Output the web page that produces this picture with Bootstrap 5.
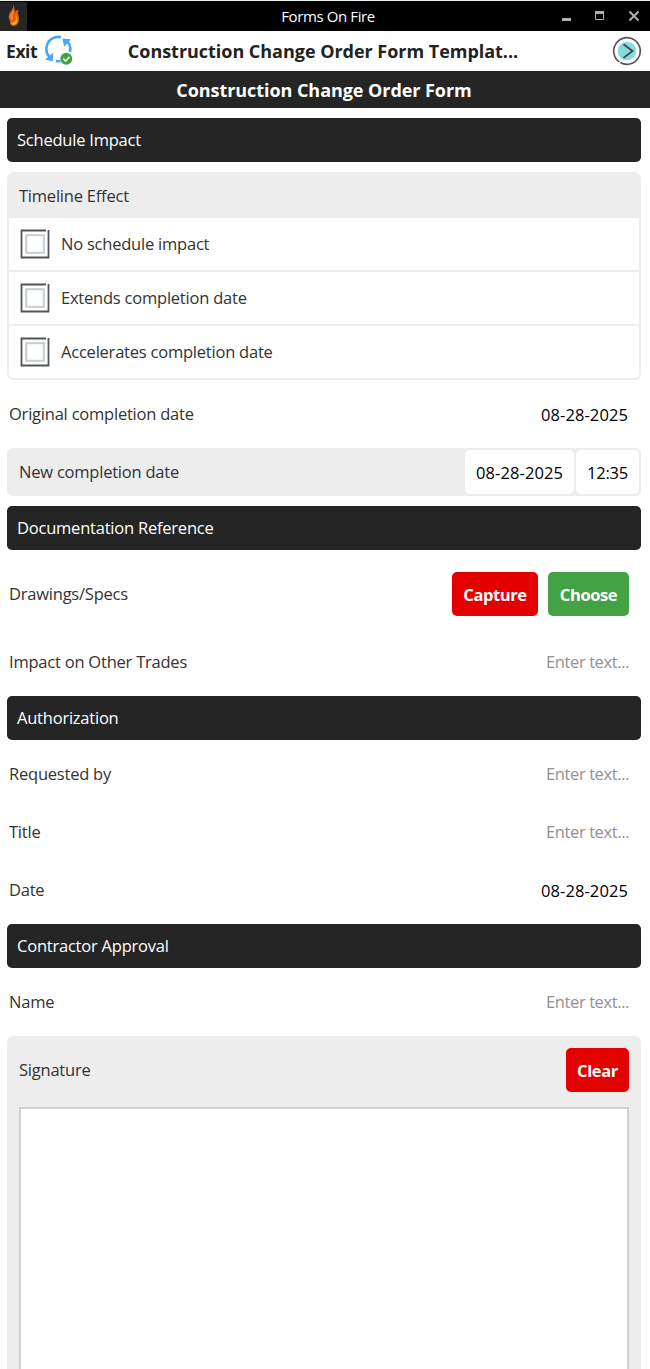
<!DOCTYPE html>
<html lang="en">
<head>
<meta charset="utf-8">
<meta name="viewport" content="width=device-width, initial-scale=1">
<title>Forms On Fire</title>
<link rel="stylesheet" href="https://cdn.jsdelivr.net/npm/bootstrap@5.3.0/dist/css/bootstrap.min.css">
<style>
  :root { --ink: #252525; --panel: #ededed; }
  body { font-family: "Open Sans", "Noto Sans", sans-serif; font-size: 16.5px; line-height: 24px; letter-spacing: -.22px; color: #333; height: 1369px; overflow: hidden; }
  .titlebar { height: 31px; border-top: 1px solid #e9efec; background: #000; font-size: 15px; letter-spacing: -.38px; }
  .titlebar-text { padding-left: 6px; }
  .app-icon { width: 27px; height: 29px; background: var(--ink); }
  .titlebar-side { width: 108px; }
  .appbar { height: 40px; font-size: 18px; font-weight: 700; letter-spacing: -.03px; color: #222; padding: 0 8px 0 6px; }
  .exit-link { width: 30px; font-size: 17.5px; letter-spacing: -.4px; }
  .appbar-title { padding-right: 40px; }
  .form-title { height: 37px; background: var(--ink); font-size: 18px; font-weight: 700; letter-spacing: -.06px; padding-right: 2px; }
  .form-body { padding: 10px 9px 0 7px; gap: 10px; }
  .section-bar { height: 44px; border-radius: 5px; padding: 0 10px; background: var(--ink); }
  .choices { border: 2px solid var(--panel); border-top: 0; border-radius: 6px; overflow: hidden; }
  .choices-head { height: 46px; padding: 2px 10px 0; background: var(--panel); }
  .choice { height: 52px; padding: 0 11px; gap: 11px; }
  .choice + .choice { height: 54px; border-top: 2px solid var(--panel); }
  .field { height: 48px; padding: 0 12px 0 2px; }
  .field-tall { height: 68px; }
  .field-value { color: #000; padding: 2px 1px 0 0; letter-spacing: .1px; }
  .hint { color: #919191; letter-spacing: -.4px; }
  .panel-row { height: 48px; padding: 2px 2px 2px 12px; background: var(--panel); border-radius: 6px; gap: 2px; }
  .stamp { height: 44px; border-radius: 5px; color: #000; padding-top: 2px; letter-spacing: .1px; }
  .stamp-date { width: 109px; }
  .stamp-time { width: 63px; letter-spacing: -.2px; }
  .action { height: 44px; border: 0; border-radius: 5px; padding: 2px 0 0; font-size: 16.5px; font-weight: 700; letter-spacing: -.4px; color: #fff; }
  .action-red { background: #e50000; }
  .action-green { background: #43a243; }
  .sign-panel { height: 400px; padding: 12px; background: var(--panel); border-radius: 6px; }
  .sign-area { height: 330px; margin-top: 15px; border: 2px solid #d0d0d0; background: #fff; }
</style>
</head>
<body class="bg-white">
<svg class="d-none" xmlns="http://www.w3.org/2000/svg">
  <symbol id="checkbox" viewBox="0 0 30 30">
    <path d="M26 1.500H1.500v27h27V1" fill="none" stroke="#555" stroke-width="1.800"/>
    <rect x="6.200" y="6.200" width="17.600" height="17.600" fill="#fff" stroke="#c5ced2" stroke-width="2"/>
  </symbol>
</svg>

<header>
  <div class="titlebar d-flex align-items-center justify-content-between text-white">
    <div class="titlebar-side">
      <div class="app-icon d-flex align-items-center justify-content-center">
        <svg width="12" height="22" viewBox="0 0 12 22">
          <path d="M5 0c1 4-3 6-4 10-1 3 1 5 1 7 0 2 1 4 3 4 4 0 6-3 6-7 0-3-1-4-1-6 0-1 0-2 1-3-3 0-4 1-4 3C7 4 6 1 5 0z" fill="#df5a14"/>
          <path d="M5 4c0 3-3 5-3 8 1 1 1 3 2 4 2-2 0-4 1-7 1-2 1-3 0-5z" fill="#f48a2a"/>
          <path d="M8 9c-1 3 1 5-1 7-1 2-3 1-4 2 1 2 2 2 3 2 3-1 4-4 3-7 0-1-1-3-1-4z" fill="#ffa51f"/>
        </svg>
      </div>
    </div>
    <div class="titlebar-text">Forms On Fire</div>
    <div class="titlebar-side d-flex justify-content-end">
      <svg width="88" height="30" viewBox="0 0 88 30">
        <rect x="0" y="17" width="9" height="3" fill="#b0b0b0"/>
        <path d="M33.500 11v7.500h8V11" fill="none" stroke="#b0b0b0"/>
        <rect x="33" y="10" width="9" height="3" fill="#b0b0b0"/>
        <path d="M67.500 10.500l9 9m0-9l-9 9" stroke="#b0b0b0" stroke-width="2"/>
      </svg>
    </div>
  </div>

  <div class="appbar d-flex align-items-center bg-white">
    <span class="exit-link">Exit</span>
    <svg class="ms-2" width="30" height="32" viewBox="0 1 30 32">
      <g fill="none" stroke="#45a7f5" stroke-width="2.600">
        <path d="M5.500 23A12 12 0 0 1 10.500 3.600Q13.500 2.400 17 3.300"/>
        <path d="M23.800 8A12 12 0 0 1 26 18"/>
        <path d="M12 27q2 .4 4.500 0"/>
      </g>
      <path d="M18.300 4.500l8.600.8-6.700 7.500zM1 25.500l8.300-6.700-.6 8.700z" fill="#45a7f5"/>
      <circle cx="22.300" cy="24.700" r="6" fill="#43a047"/>
      <path d="M19.200 24.700l2.400 2.300 4-4.200" fill="none" stroke="#e4f3e4" stroke-width="1.700"/>
    </svg>
    <span class="appbar-title flex-grow-1 text-center">Construction Change Order Form Templat...</span>
    <svg width="30" height="30" viewBox="0 0 30 30">
      <circle cx="15" cy="15" r="9.300" fill="#83ded9"/>
      <circle cx="15" cy="15" r="13.300" fill="none" stroke="#555" stroke-width="1.700" stroke-dasharray="81.800 1.800" transform="rotate(125 15 15)"/>
      <path d="M11.500 8.300l9 6.700-9 6.900" fill="none" stroke="#444" stroke-width="1.800"/>
    </svg>
  </div>
  <div class="form-title d-flex align-items-center justify-content-center text-white">Construction Change Order Form</div>
</header>

<main class="form-body d-flex flex-column">
  <div class="section-bar d-flex align-items-center text-white">Schedule Impact</div>

  <div class="choices">
    <div class="choices-head d-flex align-items-center">Timeline Effect</div>
    <div class="choice d-flex align-items-center"><svg width="30" height="30"><use href="#checkbox"/></svg><span>No schedule impact</span></div>
    <div class="choice d-flex align-items-center"><svg width="30" height="30"><use href="#checkbox"/></svg><span>Extends completion date</span></div>
    <div class="choice d-flex align-items-center"><svg width="30" height="30"><use href="#checkbox"/></svg><span>Accelerates completion date</span></div>
  </div>

  <div class="field d-flex align-items-center justify-content-between"><span>Original completion date</span><span class="field-value">08-28-2025</span></div>
  <div class="panel-row d-flex align-items-center">
    <span class="me-auto">New completion date</span>
    <span class="stamp stamp-date bg-white d-flex align-items-center justify-content-center">08-28-2025</span>
    <span class="stamp stamp-time bg-white d-flex align-items-center justify-content-center">12:35</span>
  </div>

  <div class="section-bar d-flex align-items-center text-white">Documentation Reference</div>
  <div class="field field-tall d-flex align-items-center">
    <span class="me-auto">Drawings/Specs</span>
    <button class="action action-red" style="width:86px">Capture</button>
    <button class="action action-green" style="width:81px;margin-left:10px">Choose</button>
  </div>
  <div class="field d-flex align-items-center justify-content-between"><span>Impact on Other Trades</span><span class="hint">Enter text...</span></div>

  <div class="section-bar d-flex align-items-center text-white">Authorization</div>
  <div class="field d-flex align-items-center justify-content-between"><span>Requested by</span><span class="hint">Enter text...</span></div>
  <div class="field d-flex align-items-center justify-content-between"><span>Title</span><span class="hint">Enter text...</span></div>
  <div class="field d-flex align-items-center justify-content-between"><span>Date</span><span class="field-value">08-28-2025</span></div>

  <div class="section-bar d-flex align-items-center text-white">Contractor Approval</div>
  <div class="field d-flex align-items-center justify-content-between"><span>Name</span><span class="hint">Enter text...</span></div>

  <div class="sign-panel">
    <div class="d-flex align-items-center justify-content-between">
      <span>Signature</span>
      <button class="action action-red" style="width:63px">Clear</button>
    </div>
    <div class="sign-area"></div>
  </div>
</main>
<script src="https://cdn.jsdelivr.net/npm/bootstrap@5.3.0/dist/js/bootstrap.bundle.min.js"></script>
</body>
</html>
